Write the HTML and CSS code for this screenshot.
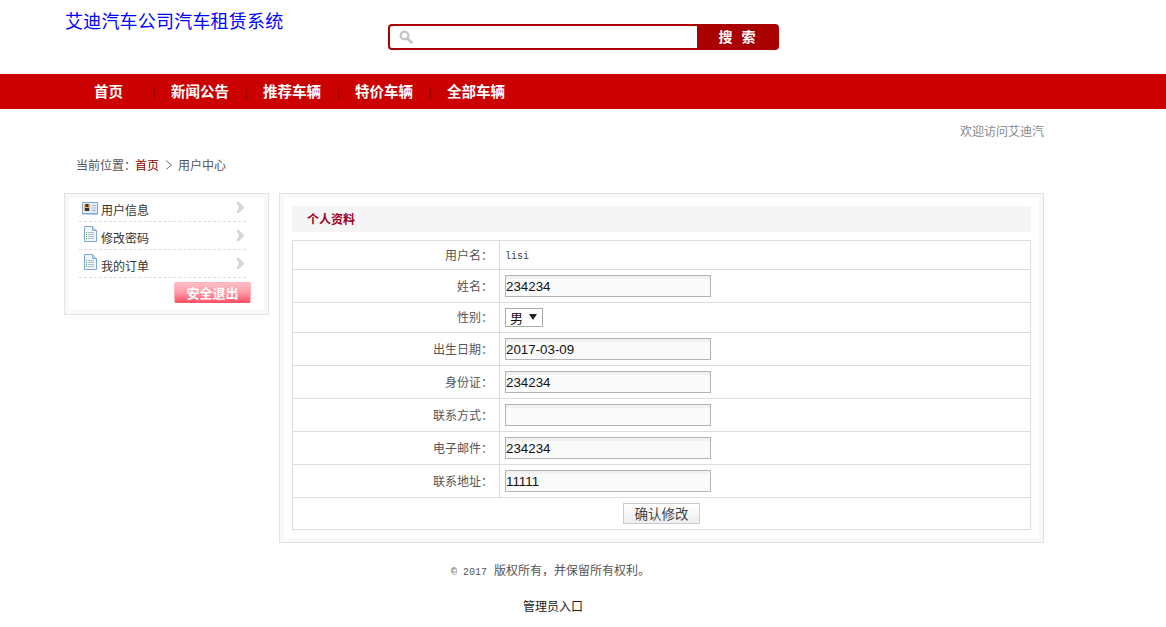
FILE: index.html
```html
<!DOCTYPE html>
<html lang="zh-CN">
<head>
<meta charset="utf-8">
<title>艾迪汽车公司汽车租赁系统</title>
<link rel="stylesheet" href="styles.css">
</head>
<body>
<header class="top wrap">
  <h1 class="logo">艾迪汽车公司汽车租赁系统</h1>
  <form class="search">
    <span class="search-field">
      <svg class="search-icon" width="14" height="14" viewBox="0 0 14 14"><circle cx="5.500" cy="5.500" r="3.900" fill="none" stroke="#c4c4c4" stroke-width="2.200"/><path d="M8.500 8.500l4 4" stroke="#c4c4c4" stroke-width="2.600" stroke-linecap="round"/></svg>
    </span>
    <span class="search-btn">搜 索</span>
  </form>
</header>
<nav class="nav">
  <ul class="nav-list wrap">
    <li class="nav-item first">首页</li>
    <li class="nav-item">新闻公告</li>
    <li class="nav-item">推荐车辆</li>
    <li class="nav-item">特价车辆</li>
    <li class="nav-item">全部车辆</li>
  </ul>
</nav>
<main class="wrap">
  <div class="welcome">欢迎访问艾迪汽</div>
  <div class="crumb">当前位置：<a class="crumb-home">首页</a><svg class="crumb-sep" width="8" height="10" viewBox="0 0 8 10"><path d="M1 .5L6.500 5 1 9.500" fill="none" stroke="#777" stroke-width="1"/></svg><span>用户中心</span></div>
  <div class="columns">
    <aside class="panel side">
      <ul class="menu">
        <li class="menu-item">
          <svg class="menu-icon" width="16" height="13" viewBox="0 0 16 13"><rect x=".5" y=".5" width="15" height="11" fill="#e4eefa" stroke="#7ea6d8"/><path d="M.5 12.500h15" stroke="#b7cfe9"/><rect x="2" y="2" width="6" height="7" fill="#e6b070"/><rect x="3.500" y="2" width="3" height="3" fill="#5a2b12"/><rect x="3" y="6" width="4" height="3" fill="#333"/><path d="M9.500 3.500h4.500M9.500 6h4.500M9.500 8.500h4.500" stroke="#9db6d6"/></svg>
          <span class="menu-text">用户信息</span>
          <svg class="menu-arrow" width="9" height="11" viewBox="0 0 9 11"><path d="M1 .5h2l5 5-5 5H1l2.500-5z" fill="#d8d8d8" stroke="#bdbdbd" stroke-width=".5"/></svg>
        </li>
        <li class="menu-item">
          <svg class="menu-icon doc" width="13" height="16" viewBox="0 0 13 16"><path d="M.5.500h8l4 4v11H.5z" fill="#f2f7fd" stroke="#7ea6d8"/><path d="M8.500.500v4h4" fill="#cfe0f4" stroke="#7ea6d8"/><path d="M4 6.500h6M4 8.500h6M4 10.500h6M4 12.500h6" stroke="#a9bdd6"/><path d="M2 6.500h1M2 8.500h1M2 10.500h1M2 12.500h1" stroke="#4aa84a"/></svg>
          <span class="menu-text">修改密码</span>
          <svg class="menu-arrow" width="9" height="11" viewBox="0 0 9 11"><path d="M1 .5h2l5 5-5 5H1l2.500-5z" fill="#d8d8d8" stroke="#bdbdbd" stroke-width=".5"/></svg>
        </li>
        <li class="menu-item">
          <svg class="menu-icon doc" width="13" height="16" viewBox="0 0 13 16"><path d="M.5.500h8l4 4v11H.5z" fill="#f2f7fd" stroke="#7ea6d8"/><path d="M8.500.500v4h4" fill="#cfe0f4" stroke="#7ea6d8"/><path d="M4 6.500h6M4 8.500h6M4 10.500h6M4 12.500h6" stroke="#a9bdd6"/><path d="M2 6.500h1M2 8.500h1M2 10.500h1M2 12.500h1" stroke="#4aa84a"/></svg>
          <span class="menu-text">我的订单</span>
          <svg class="menu-arrow" width="9" height="11" viewBox="0 0 9 11"><path d="M1 .5h2l5 5-5 5H1l2.500-5z" fill="#d8d8d8" stroke="#bdbdbd" stroke-width=".5"/></svg>
        </li>
      </ul>
      <div class="logout-row"><span class="logout">安全退出</span></div>
    </aside>
    <section class="panel content">
      <h2 class="band">个人资料</h2>
      <table class="form">
        <tr class="r29"><th>用户名：</th><td class="mono">lisi</td></tr>
        <tr><th>姓名：</th><td><input class="field" value="234234"></td></tr>
        <tr class="r30"><th>性别：</th><td><span class="select">男<i class="caret"></i></span></td></tr>
        <tr><th>出生日期：</th><td><input class="field" value="2017-03-09"></td></tr>
        <tr><th>身份证：</th><td><input class="field" value="234234"></td></tr>
        <tr><th>联系方式：</th><td><input class="field" value=""></td></tr>
        <tr><th>电子邮件：</th><td><input class="field" value="234234"></td></tr>
        <tr><th>联系地址：</th><td><input class="field" value="11111"></td></tr>
        <tr class="r32"><td class="actions" colspan="2"><button type="button" class="submit">确认修改</button></td></tr>
      </table>
    </section>
  </div>
</main>
<footer class="foot">
  <p class="copy"><span class="mono year">© 2017</span>版权所有，并保留所有权利。</p>
  <p class="admin">管理员入口</p>
</footer>
</body>
</html>
```
FILE: styles.css
```css
* { box-sizing: border-box; }
html, body { margin: 0; padding: 0; }
body { background: #fff; color: #555; font: 12px/1.2 "Noto Sans CJK SC", "Liberation Sans", sans-serif; height: 627px; overflow: hidden; }
ul { list-style: none; margin: 0; padding: 0; }
.wrap { width: 980px; margin-left: 64px; }

.top { height: 74px; display: flex; align-items: flex-start; }
.logo { margin: 9px 0 0 1px; width: 323px; font-size: 18px; line-height: 22px; font-weight: 400; letter-spacing: .2px; color: #00f; white-space: nowrap; }
.search { margin-top: 24px; width: 391px; height: 26px; display: flex; border: 2px solid #a90000; border-radius: 4px; background: #a90000; }
.search-field { width: 307px; background: #fff; border-radius: 2px 0 0 2px; display: flex; align-items: center; padding-left: 9px; }
.search-btn { flex: 1; color: #fff; font-size: 14px; font-weight: 700; line-height: 20px; word-spacing: 6px; text-align: center; white-space: pre; }

.nav { height: 35px; background: #cb0000; }
.nav-list { display: flex; align-items: flex-start; height: 35px; padding-left: 30px; }
.nav-item { position: relative; width: 92px; color: #fff; font-size: 14.500px; font-weight: 700; line-height: 33px; white-space: nowrap; }
.nav-item.first { width: 77px; }
.nav-item:not(.first)::before { content: ""; position: absolute; left: -17px; top: 12px; height: 13px; border-left: 1px dotted #7a0000; }

.welcome { height: 22px; margin-top: 11px; text-align: right; font-size: 12px; line-height: 22px; color: #888; }
.crumb { display: flex; align-items: center; height: 20px; margin-top: 13px; padding-left: 12px; line-height: 20px; color: #555; }
.crumb-home { color: #800; font-size: 12px; margin-left: -1px; }
.crumb-sep { margin: 0 5px 0 6px; }

.columns { display: flex; align-items: flex-start; gap: 10px; margin-top: 18px; }
.panel { border: 1px solid #e3e3e3; outline: 4px solid #f8f8f8; outline-offset: -5px; background: #fff; }
.side { width: 205px; height: 122px; padding: 0 22px 0 14px; }
.menu-item { display: flex; align-items: center; height: 28px; padding: 5px 0 0 22px; border-bottom: 1px dashed #ddd; position: relative; color: #333; }
.menu-icon { position: absolute; left: 3px; top: 8px; }
.menu-icon.doc { left: 5px; top: 4px; }
.menu-text { font-size: 12px; }
.menu-arrow { position: absolute; right: 1px; top: 8px; }
.logout-row { display: flex; justify-content: flex-end; margin: 4px -5px 0 0; }
.logout { width: 77px; height: 21px; border-radius: 2px; border: 1px solid #ffb4bc; border-bottom-color: #f0566a; background: linear-gradient(#ffc0c6, #ff9aa6 50%, #ff5468); color: #fff; font-size: 13px; font-weight: 700; line-height: 19px; text-align: center; }

.content { width: 765px; height: 350px; padding: 12px; }
.band { height: 26px; margin: 0 0 8px; background: #f5f5f5; padding-left: 15px; font-size: 12px; font-weight: 700; line-height: 26px; color: #a00020; }
.form { width: 739px; border-collapse: collapse; table-layout: fixed; }
.form tr { height: 33px; }
.form tr.r29 { height: 29px; }
.form tr.r30 { height: 30px; }
.form tr.r32 { height: 32px; }
.form th, .form td { border: 1px solid #ddd; padding: 0; font-weight: 400; }
.form th { width: 207px; padding-right: 6px; text-align: right; color: #555; }
.form td { padding-left: 5px; }
.mono { font-family: "Liberation Mono", monospace; font-size: 10px; }
.form td.mono { padding: 3px 0 0 5px; color: #444; }
.year { margin-right: 7px; }
.field { display: block; width: 206px; height: 22px; padding: 0; border: 1px solid #b3b3b3; background: linear-gradient(#f1f1f1 0, #f1f1f1 3px, #fafafa 3px); color: #111; font: 13.333px/20px "Liberation Sans", sans-serif; outline: 0; }
.select { display: flex; align-items: center; width: 38px; height: 19px; padding-left: 4px; border: 1px solid #aaa; font-size: 13px; color: #111; position: relative; }
.caret { position: absolute; right: 5px; top: 5px; border: 4px solid transparent; border-top: 6px solid #222; border-bottom: 0; }
.form td.actions { padding: 0; text-align: center; }
.submit { width: 77px; height: 21px; padding: 0; border: 1px solid #ccc; background: linear-gradient(#fff, #eee); color: #444; font: 13.500px/19px "Noto Sans CJK SC", sans-serif; vertical-align: middle; }

.foot { padding-top: 18px; }
.copy, .admin { margin: 0; }
.copy { padding-left: 451px; line-height: 18px; font-size: 12px; color: #555; }
.admin { padding-left: 523px; margin-top: 15px; line-height: 18px; color: #222; }
```
